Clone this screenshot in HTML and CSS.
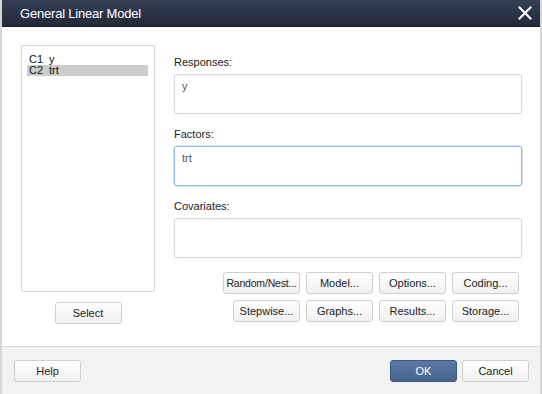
FILE: index.html
```html
<!DOCTYPE html>
<html lang="en">
<head>
  <meta charset="UTF-8" />
  <meta name="viewport" content="width=device-width, initial-scale=1.0" />
  <title>General Linear Model</title>

  <!-- CSS -->
  <link rel="stylesheet" href="styles.css">
</head>
<body>

  <div class="window">
    <div class="titlebar">
      <span class="title">General Linear Model</span>
      <svg class="close" width="14" height="14" viewBox="0 0 14 14">
        <path d="M1.5 1.5 L12.5 12.5 M12.5 1.5 L1.5 12.5" stroke="#fff" stroke-width="2" stroke-linecap="square" />
      </svg>
    </div>

    <div class="main">
      <div class="left">
        <ul class="varlist">
          <li><span class="col">C1</span>y</li>
          <li class="selected"><span class="col">C2</span>trt</li>
        </ul>
        <button class="btn select">Select</button>
      </div>

      <div class="right">
        <label class="label">Responses:</label>
        <div class="field">y</div>

        <label class="label">Factors:</label>
        <div class="field focus">trt</div>

        <label class="label">Covariates:</label>
        <div class="field"></div>

        <div class="btnrow">
          <button class="btn wide">Random/Nest...</button>
          <button class="btn">Model...</button>
          <button class="btn">Options...</button>
          <button class="btn">Coding...</button>
        </div>
        <div class="btnrow">
          <button class="btn">Stepwise...</button>
          <button class="btn">Graphs...</button>
          <button class="btn">Results...</button>
          <button class="btn">Storage...</button>
        </div>
      </div>
    </div>

    <div class="footer">
      <button class="btn">Help</button>
      <div class="spacer"></div>
      <button class="btn primary">OK</button>
      <button class="btn">Cancel</button>
    </div>
  </div>

</body>
</html>
```

FILE: styles.css
```css
* {
  margin: 0;
  padding: 0;
  box-sizing: border-box;
  font-family: 'Liberation Sans', Arial, sans-serif;
}

body {
  background: #fff;
  color: #222;
  font-size: 11px;
}

.window {
  width: 542px;
  height: 394px;
  display: flex;
  flex-direction: column;
  border-left: 2px solid #d6d6d6;
  border-right: 2px solid #d6d6d6;
  background: #fff;
}

/* Barre de titre */
.titlebar {
  height: 27px;
  flex: none;
  display: flex;
  align-items: center;
  padding: 0 8px 0 18px;
  background: linear-gradient(#353f55, #222a3a);
  border-bottom: 1px solid #171c27;
}

.title {
  flex: 1;
  color: #fff;
  font-size: 13px;
  letter-spacing: -0.2px;
}

.close {
  display: block;
}

/* Zone principale */
.main {
  flex: 1;
  display: flex;
  padding: 18px 0 0 19px;
  gap: 19px;
}

.left {
  width: 134px;
  display: flex;
  flex-direction: column;
  align-items: center;
  gap: 10px;
}

.varlist {
  list-style: none;
  width: 134px;
  height: 247px;
  border: 1px solid #d9d9d9;
  border-radius: 2px;
  padding: 8px 6px 0 5px;
}

.varlist li {
  height: 11px;
  line-height: 11px;
  padding-left: 2px;
  font-size: 11px;
  color: #111;
}

.varlist li.selected {
  background: #cccccc;
}

.col {
  display: inline-block;
  width: 20px;
}

.right {
  width: 348px;
  display: flex;
  flex-direction: column;
  padding-top: 11px;
}

.label {
  display: block;
  height: 13px;
  line-height: 13px;
  margin-bottom: 5px;
  font-size: 11px;
  color: #222;
}

.field {
  height: 40px;
  margin-bottom: 14px;
  border: 1px solid #d4d4d4;
  border-radius: 3px;
  padding: 5px 7px;
  font-size: 11px;
  color: #555;
  box-shadow: inset 0 1px 1px rgba(0,0,0,0.04);
}

.field.focus {
  border-color: #8db6e6;
  box-shadow: 0 0 0 1px #d7e6f7;
}

.field:last-of-type {
  margin-bottom: 7px;
}

.btnrow {
  display: flex;
  justify-content: flex-end;
  gap: 6px;
  padding-right: 3px;
  margin-bottom: 6px;
}

/* Boutons */
.btn {
  width: 67px;
  height: 22px;
  border: 1px solid #cfcfcf;
  border-radius: 3px;
  background: linear-gradient(#ffffff, #f0f0f0);
  color: #222;
  font-size: 11px;
  cursor: pointer;
}

.btn.wide {
  width: 77px;
  font-size: 10.5px;
  letter-spacing: -0.2px;
}

.btn.primary {
  background: linear-gradient(#5b79a5, #45638f);
  border-color: #3d5780;
  color: #fff;
}

/* Pied */
.footer {
  height: 48px;
  flex: none;
  display: flex;
  align-items: flex-start;
  gap: 5px;
  padding: 13px 11px 0 12px;
  background: #f2f2f2;
  border-top: 1px solid #dcdcdc;
}

.spacer {
  flex: 1;
}
```
